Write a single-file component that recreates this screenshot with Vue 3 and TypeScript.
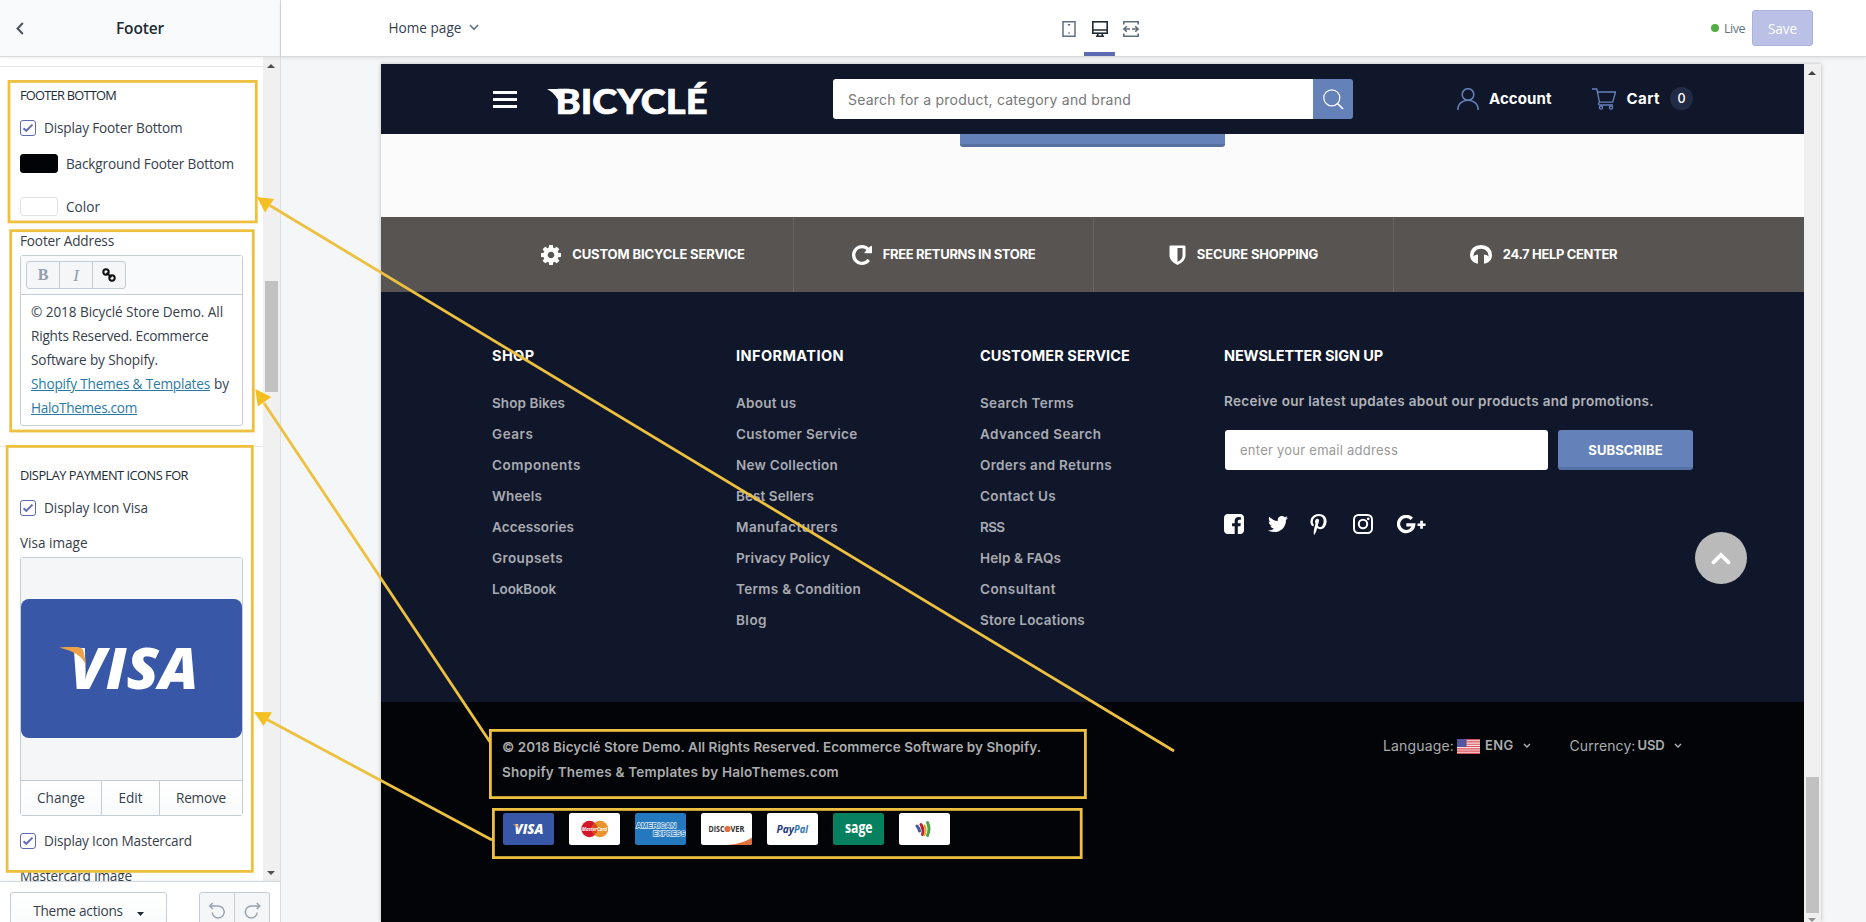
<script setup lang="ts">
import type { Directive } from 'vue'

/* Tracks a label out (or in) until it spans the given width in pixels. */
const vFit: Directive<HTMLElement, number> = {
  mounted(el, { value }) {
    const count = (el.textContent ?? '').trim().length
    const natural = el.getBoundingClientRect().width
    if (count > 1) el.style.letterSpacing = `${((value - natural) / count).toFixed(3)}px`
  },
}

type Label = [text: string, width: number]

const columns: { title: Label; links: Label[] }[] = [
  {
    title: ['SHOP', 42.5],
    links: [['Shop Bikes', 73], ['Gears', 41.5], ['Components', 89], ['Wheels', 50], ['Accessories', 82], ['Groupsets', 71], ['LookBook', 64]],
  },
  {
    title: ['INFORMATION', 108],
    links: [['About us', 60.5], ['Customer Service', 121.5], ['New Collection', 102], ['Best Sellers', 78], ['Manufacturers', 102], ['Privacy Policy', 94], ['Terms & Condition', 125], ['Blog', 31]],
  },
  {
    title: ['CUSTOMER SERVICE', 150],
    links: [['Search Terms', 94], ['Advanced Search', 121.5], ['Orders and Returns', 132], ['Contact Us', 76], ['RSS', 24.5], ['Help & FAQs', 81], ['Consultant', 76], ['Store Locations', 105]],
  },
]

const cogPath = 'M1152 896q0-106-75-181t-181-75-181 75-75 181 75 181 181 75 181-75 75-181zm512-109v222q0 12-8 23t-20 13l-185 28q-19 54-39 91 35 50 107 138 10 12 10 25t-9 23q-27 37-99 108t-94 71q-12 0-26-9l-138-108q-44 23-91 38-16 136-29 186-7 28-36 28h-222q-14 0-24.5-8.5t-11.5-21.5l-28-184q-49-16-90-37l-141 107q-10 9-25 9-14 0-25-11-126-114-165-168-7-10-7-23 0-12 8-23 15-21 51-66.5t54-70.5q-27-50-41-99l-183-27q-13-2-21-12.5t-8-23.5v-222q0-12 8-23t19-13l186-28q14-46 39-92-40-57-107-138-10-12-10-24 0-10 9-23 26-36 98.5-107.5t94.5-71.5q13 0 26 10l138 107q44-23 91-38 16-136 29-186 7-28 36-28h222q14 0 24.5 8.5t11.5 21.5l28 184q49 16 90 37l142-107q9-9 24-9 13 0 25 10 129 119 165 170 7 8 7 22 0 12-8 23-15 21-51 66.5t-54 70.5q26 50 41 98l183 28q13 2 21 12.5t8 23.5z'
const repeatPath = 'M1664 256v448q0 26-19 45t-45 19h-448q-42 0-59-40-17-39 14-69l138-138q-148-137-349-137-104 0-198.5 40.5t-163.5 109.5-109.5 163.5-40.5 198.5 40.5 198.5 109.5 163.5 163.5 109.5 198.5 40.5q119 0 225-52t179-147q7-10 23-12 15 0 25 9l137 138q9 8 9.5 20.5t-7.5 22.5q-109 132-264 204.5t-327 72.5q-156 0-298-61t-245-164-164-245-61-298 61-298 164-245 245-164 298-61q147 0 284.5 55.5t244.5 156.5l130-129q29-31 70-14 39 17 39 59z'
const facebookPath = 'M1376 128q119 0 203.5 84.5t84.5 203.5v960q0 119-84.5 203.5t-203.5 84.5h-188v-595h199l30-232h-229v-148q0-56 23.5-84t91.5-28l122-1v-207q-63-9-178-9-136 0-217.5 80t-81.5 226v171h-200v232h200v595h-532q-119 0-203.5-84.5t-84.5-203.5v-960q0-119 84.5-203.5t203.5-84.5h960z'
const twitterPath = 'M1684 408q-67 98-162 167 1 14 1 42 0 130-38 259.5t-115.5 248.5-184.5 210.5-258 146-323 54.5q-271 0-496-145 35 4 78 4 225 0 401-138-105-2-188-64.5t-114-159.5q33 5 61 5 43 0 85-11-112-23-185.5-111.5t-73.5-205.5v-4q68 38 146 41-66-44-105-115t-39-154q0-88 44-163 121 149 294.5 238.5t371.5 99.5q-8-38-8-74 0-134 94.5-228.5t228.5-94.5q140 0 236 102 109-21 205-78-37 115-142 178 93-10 186-50z'
const pinterestPath = 'M256 597q0-108 37.5-203.5t103.5-166.5 152-123 185-78 202-26q158 0 294 66.5t221 193.5 85 287q0 96-19 188t-60 177-100 149.5-145 103-189 38.5q-68 0-135-32t-96-88q-10 39-28 112.5t-23.5 95-20.5 71-26 71-32 62.5-46 77.5-62 86.5l-14 5-9-10q-15-157-15-188 0-92 21.5-206.5t66.5-287.5 52-203q-32-65-32-169 0-83 52-156t132-73q61 0 95 40.5t34 102.5q0 66-44 191t-44 187q0 63 45 104.5t109 41.5q55 0 102-25t78.5-68 56-95 38-110.5 20-111 6.5-99.5q0-173-109.5-269.5t-285.5-96.5q-200 0-334 129.5t-134 328.5q0 44 12.5 85t27 65 27 45.5 12.5 30.5q0 28-15 73t-37 45q-2 0-17-3-51-15-90.5-56t-61-94.5-32.5-108-11-106.5z'
</script>

<template>
  <div class="editor">
    <aside class="side">
      <header class="side-head">
        <svg class="back" width="8" height="13" viewBox="0 0 8 13"><path d="M6.8 1 1.6 6.5l5.2 5.5" fill="none" stroke="#4a5663" stroke-width="2.1" /></svg>
        <span v-fit="48" class="side-title">Footer</span>
      </header>

      <div class="side-mid">
        <div class="settings">
          <div class="rule first"></div>
          <h3><span v-fit="96">FOOTER BOTTOM</span></h3>
          <label class="check">
            <i class="box"><svg width="12" height="10" viewBox="0 0 12 10"><path d="m1.5 5.2 2.8 2.6L10.5 1.6" /></svg></i>
            <span v-fit="138.5">Display Footer Bottom</span>
          </label>
          <div class="color-row"><i class="swatch black"></i><span v-fit="168">Background Footer Bottom</span></div>
          <div class="color-row second"><i class="swatch"></i><span v-fit="34">Color</span></div>
          <div class="field"><span v-fit="94">Footer Address</span></div>
          <div class="rte">
            <div class="rte-bar">
              <div class="rte-group">
                <b class="bold">B</b><b class="ital">I</b>
                <b><svg width="14" height="14" viewBox="0 0 14 14" fill="none" stroke="#111" stroke-width="2"><circle cx="4" cy="4" r="2.7" /><circle cx="10" cy="10" r="2.7" /><path d="m4.6 4.6 4.8 4.8" /></svg></b>
              </div>
            </div>
            <div class="rte-text">
              <div><span v-fit="192">© 2018 Bicyclé Store Demo. All</span></div>
              <div><span v-fit="177.5">Rights Reserved. Ecommerce</span></div>
              <div><span v-fit="127">Software by Shopify.</span></div>
              <div class="split"><a v-fit="179">Shopify Themes &amp; Templates</a><span v-fit="15">by</span></div>
              <div><a v-fit="106">HaloThemes.com</a></div>
            </div>
          </div>
          <div class="rule"></div>
          <h3><span v-fit="168">DISPLAY PAYMENT ICONS FOR</span></h3>
          <label class="check">
            <i class="box"><svg width="12" height="10" viewBox="0 0 12 10"><path d="m1.5 5.2 2.8 2.6L10.5 1.6" /></svg></i>
            <span v-fit="104">Display Icon Visa</span>
          </label>
          <div class="field image-label"><span v-fit="67.5">Visa image</span></div>
          <div class="image-box">
            <div class="image-view">
              <svg width="221" height="139" viewBox="0 0 221 139">
                <rect width="221" height="139" rx="8" fill="#3857a6" />
                <text x="48.5" y="89.8" textLength="129" lengthAdjust="spacingAndGlyphs" class="visa" font-size="57">VISA</text>
                <path d="M38.5 48.8q3-.8 6-.8h12q5 .4 6 4l2.600 14.500q-5.500-13.500-26.600-17.700z" fill="#eda247" />
              </svg>
            </div>
            <div class="image-actions">
              <span><em v-fit="48">Change</em></span><span><em v-fit="24">Edit</em></span><span><em v-fit="50">Remove</em></span>
            </div>
          </div>
          <label class="check mc">
            <i class="box"><svg width="12" height="10" viewBox="0 0 12 10"><path d="m1.5 5.2 2.800 2.600L10.500 1.600" /></svg></i>
            <span v-fit="148">Display Icon Mastercard</span>
          </label>
          <div class="field image-label"><span v-fit="112">Mastercard image</span></div>
        </div>
        <div class="scroll">
          <svg class="up" width="8" height="4" viewBox="0 0 8 4"><path d="M0 4 4 0l4 4z" fill="#505050" /></svg>
          <i class="thumb"></i>
          <svg class="down" width="8" height="4" viewBox="0 0 8 4"><path d="m0 0 4 4 4-4z" fill="#505050" /></svg>
        </div>
      </div>

      <footer class="side-foot">
        <button class="theme"><span v-fit="89.500">Theme actions</span><svg width="7" height="4" viewBox="0 0 7 4"><path d="M0 0h7L3.500 4z" fill="#212b36" /></svg></button>
        <div class="history">
          <svg width="18" height="18" viewBox="0 0 18 18"><path d="M4.500 1 1.500 4l3 3M1.500 4H10a6 6 0 1 1-6 6.500" /></svg>
          <svg width="18" height="18" viewBox="0 0 18 18"><path d="m13.500 1 3 3-3 3M16.500 4H8a6 6 0 1 0 6 6.500" /></svg>
        </div>
      </footer>
    </aside>

    <section class="main">
      <header class="bar">
        <div class="page-pick">
          <span v-fit="73">Home page</span>
          <svg width="10" height="7" viewBox="0 0 10 7"><path d="m1 1 4 4.300L9 1" fill="none" stroke="#637381" stroke-width="1.600" /></svg>
        </div>
        <nav class="devices">
          <i><svg width="16" height="16" viewBox="0 0 16 16" fill="none" stroke="#5f6f7d" stroke-width="1.500"><rect x="2" y=".75" width="12" height="14.500" /><path d="M6.800 3.800h2.400M7.300 12h1.400" /></svg></i>
          <i class="on"><svg width="16" height="16" viewBox="0 0 16 16" fill="none" stroke="#212b36" stroke-width="1.600"><rect x=".8" y=".8" width="14.400" height="11.400" /><path d="M1 9h14M5.800 12v3M10.200 12v3M4 15.200h8" /></svg></i>
          <i><svg width="16" height="16" viewBox="0 0 16 16" fill="none" stroke="#5f6f7d" stroke-width="1.600"><path d="M.8 3.500V.8h14.400v2.700M.8 12.500v2.700h14.400v-2.700M7 8H1.300M9 8h5.700M3.800 5.200 1 8l2.800 2.800M12.200 5.200 15 8l-2.800 2.800" /></svg></i>
        </nav>
        <div class="status">
          <i class="dot"></i><span v-fit="21" class="live">Live</span>
          <button class="save"><span v-fit="29">Save</span></button>
        </div>
      </header>

      <div class="stage">
        <div class="frame">
          <div class="store">
            <header class="store-head">
              <svg class="menu" width="24" height="17" viewBox="0 0 24 17" fill="#fff"><path d="M0 0h24v3H0zM0 7h24v3H0zM0 14h24v3H0z" /></svg>
              <svg class="logo" width="162" height="44" viewBox="0 0 162 44" fill="#fff">
                <path d="M0 16h16v14l-6-4.500q-3-6-10-9.500z" />
                <text x="8.500" y="41" textLength="152" lengthAdjust="spacingAndGlyphs" class="logo-text">BICYCLÉ</text>
              </svg>
              <div class="search">
                <div class="search-input"><span v-fit="283">Search for a product, category and brand</span></div>
                <div class="search-btn"><svg width="21" height="21" viewBox="0 0 21 21" fill="none" stroke="#fff" stroke-width="1.200"><circle cx="8.800" cy="8.800" r="8" /><path d="m14.500 14.500 5.500 5.500" stroke-width="1.700" /></svg></div>
              </div>
              <div class="account">
                <svg width="22" height="22" viewBox="0 0 22 22" fill="none" stroke="#6482ba" stroke-width="1.500"><circle cx="11" cy="6.500" r="5.800" /><path d="M.8 22C.8 8.900 21.200 8.900 21.200 22" /></svg>
                <span v-fit="62.500">Account</span>
              </div>
              <div class="cart">
                <svg width="24" height="22" viewBox="0 0 24 22" fill="none" stroke="#6482ba" stroke-width="1.300"><path d="M0 1h4.800L7.500 14.200h13.200L23.500 4H5.500M7.500 14.200q-2.200 2.300.5 2.800h13" /><circle cx="9" cy="19.600" r="1.600" /><circle cx="19" cy="19.600" r="1.600" /></svg>
                <span v-fit="33.500">Cart</span><em>0</em>
              </div>
            </header>

            <div class="blank"><i></i></div>

            <div class="services">
              <div class="service"><svg width="20" height="20" viewBox="128 128 1536 1536" fill="#fff"><path :d="cogPath" /></svg><span v-fit="172.500">CUSTOM BICYCLE SERVICE</span></div>
              <div class="service"><svg width="20" height="20" viewBox="128 128 1536 1536" fill="#fff"><path :d="repeatPath" /></svg><span v-fit="152.500">FREE RETURNS IN STORE</span></div>
              <div class="service"><svg width="17" height="20" viewBox="0 0 17 20"><path d="M1.500.5h14q1 0 1 1V11q0 5-8 9-8-4-8-9V1.500q0-1 1-1z" fill="#fff" /><path d="M8.500 3h5v8q0 3-5 6z" fill="#575452" /></svg><span v-fit="121.500">SECURE SHOPPING</span></div>
              <div class="service"><svg width="22" height="19" viewBox="0 0 22 19" fill="#fff"><path d="M8 9.500V18.500H6.500Q0 16.500 0 10 .5.300 11 0q10.500.3 11 10 0 6.500-6.500 8.500H14V9.500q3 .2 4.600 2Q18.200 4 11 3.800 3.800 4 3.400 11.500 5 9.700 8 9.500z" /></svg><span v-fit="114.500">24.7 HELP CENTER</span></div>
            </div>

            <div class="links">
              <div v-for="col in columns" :key="col.title[0]" class="col">
                <h4><span v-fit="col.title[1]">{{ col.title[0] }}</span></h4>
                <ul><li v-for="link in col.links" :key="link[0]"><span v-fit="link[1]">{{ link[0] }}</span></li></ul>
              </div>
              <div class="news">
                <h4><span v-fit="159">NEWSLETTER SIGN UP</span></h4>
                <p><span v-fit="430">Receive our latest updates about our products and promotions.</span></p>
                <div class="form">
                  <div class="email"><span v-fit="158">enter your email address</span></div>
                  <div class="sub"><span v-fit="74.500">SUBSCRIBE</span></div>
                </div>
                <div class="social">
                  <svg width="20" height="20" viewBox="128 128 1536 1536"><path :d="facebookPath" /></svg>
                  <svg width="20" height="18" viewBox="108 256 1576 1280"><path :d="twitterPath" /></svg>
                  <svg width="17" height="21" viewBox="256 0 1280 1664"><path :d="pinterestPath" /></svg>
                  <svg width="20" height="20" viewBox="0 0 20 20"><g fill="none" stroke="#fff" stroke-width="2"><rect x="1" y="1" width="18" height="18" rx="4.500" /><circle cx="10" cy="10" r="4.200" /></g><circle cx="15.200" cy="4.800" r="1.400" /></svg>
                  <svg width="29" height="19" viewBox="0 0 29 19"><path d="M14.800 3.900A7.600 7.600 0 1 0 16.700 9.800H9.300" fill="none" stroke="#fff" stroke-width="3.300" /><path d="M23.200 5.700h2.700v2.700h2.700v2.700h-2.700v2.700h-2.700v-2.700h-2.700V8.400h2.700z" /></svg>
                </div>
              </div>
              <div class="totop"><svg width="20" height="13" viewBox="0 0 20 13"><path d="M2.500 10.300 10 3l7.500 7.300" fill="none" stroke="#fff" stroke-width="3.800" stroke-linecap="round" /></svg></div>
            </div>

            <div class="legal">
              <div class="legal-left">
                <p><span v-fit="539">© 2018 Bicyclé Store Demo. All Rights Reserved. Ecommerce Software by Shopify.</span></p>
                <p><span v-fit="337">Shopify Themes &amp; Templates by HaloThemes.com</span></p>
                <div class="cards">
                  <svg viewBox="0 0 51 32"><rect width="51" height="32" rx="2.500" fill="#3857a6" /><text x="11.500" y="21" textLength="29" lengthAdjust="spacingAndGlyphs" class="visa" font-size="13.500">VISA</text><path d="M9.500 11.500h5l1 4q-2-3-6-4z" fill="#eda247" /></svg>
                  <svg viewBox="0 0 51 32"><rect width="51" height="32" rx="2.500" fill="#fff" /><circle cx="20.500" cy="16" r="8.200" fill="#d3172b" /><circle cx="31" cy="16" r="8.200" fill="#e8932c" /><path d="M25.750 9.700a8.200 8.200 0 0 1 0 12.600 8.200 8.200 0 0 1 0-12.600z" fill="#d9471d" /><text x="13" y="18" textLength="25" lengthAdjust="spacingAndGlyphs" class="mark ital" font-size="6" fill="#fff">MasterCard</text></svg>
                  <svg viewBox="0 0 51 32"><rect width="51" height="32" rx="2.500" fill="#2478bd" /><g class="amex" font-size="8"><text x="1" y="14.800" textLength="40" lengthAdjust="spacingAndGlyphs">AMERICAN</text><text x="18" y="22.900" textLength="32.500" lengthAdjust="spacingAndGlyphs">EXPRESS</text></g></svg>
                  <svg viewBox="0 0 51 32"><rect width="51" height="32" rx="2.500" fill="#fff" /><path d="M27 32q16-1.500 24-7.500v5q0 2.500-2.500 2.500z" fill="#e0703a" /><text x="7.500" y="19.200" textLength="16" lengthAdjust="spacingAndGlyphs" class="mark" font-size="8.500" fill="#333">DISC</text><circle cx="26.500" cy="16" r="3.100" fill="#e0703a" /><text x="29.500" y="19.200" textLength="14" lengthAdjust="spacingAndGlyphs" class="mark" font-size="8.500" fill="#333">VER</text></svg>
                  <svg viewBox="0 0 51 32"><rect width="51" height="32" rx="2.500" fill="#fff" /><text x="9.500" y="19.800" textLength="17.500" lengthAdjust="spacingAndGlyphs" class="mark ital" font-size="10.500" fill="#253b80">Pay</text><text x="27" y="19.800" textLength="14" lengthAdjust="spacingAndGlyphs" class="mark ital" font-size="10.500" fill="#2e78b5">Pal</text></svg>
                  <svg viewBox="0 0 51 32"><rect width="51" height="32" rx="2.500" fill="#078060" /><text x="12" y="20.200" textLength="27.500" lengthAdjust="spacingAndGlyphs" class="mark" font-size="15.500" fill="#fff">sage</text></svg>
                  <svg viewBox="0 0 51 32"><rect width="51" height="32" rx="2.500" fill="#fff" /><g fill="none" stroke-width="3" stroke-linecap="round"><path d="M18 13q2 2 2.500 5" stroke="#3e5ba8" /><path d="M22 11.500q3 5 1.500 10" stroke="#b52a2e" /><path d="M25.500 12.500q2 4 0 9.500" stroke="#e8a12d" stroke-width="2" /><path d="M28.500 9.500q3 6.500 0 13" stroke="#4ca648" /></g></svg>
                </div>
              </div>
              <div class="locale">
                <span v-fit="71">Language:</span>
                <svg class="flag" width="23" height="15" viewBox="0 0 23 15"><rect width="23" height="15" fill="#f6dede" /><path d="M0 .6h23M0 2.900h23M0 5.200h23M0 7.500h23M0 9.800h23M0 12.100h23M0 14.400h23" stroke="#d9535c" stroke-width="1.150" /><rect width="9.500" height="8" fill="#54559c" /></svg>
                <b v-fit="28.500">ENG</b><svg class="chev" width="8" height="6" viewBox="0 0 8 6"><path d="m1 1 3 3 3-3" /></svg>
                <span v-fit="66" class="cur">Currency:</span><b v-fit="27">USD</b><svg class="chev" width="8" height="6" viewBox="0 0 8 6"><path d="m1 1 3 3 3-3" /></svg>
              </div>
            </div>
          </div>
          <div class="store-scroll">
            <svg class="up" width="8" height="4" viewBox="0 0 8 4"><path d="M0 4 4 0l4 4z" fill="#404040" /></svg>
            <i class="thumb"></i>
            <svg class="down" width="8" height="4" viewBox="0 0 8 4"><path d="m0 0 4 4 4-4z" fill="#909090" /></svg>
          </div>
        </div>
      </div>
    </section>

    <svg class="notes" width="1866" height="922" viewBox="0 0 1866 922">
      <g fill="none" stroke="#edc03f" stroke-width="2.800">
        <rect x="9" y="81.400" width="247.300" height="140.500" />
        <rect x="10.700" y="230.700" width="242.600" height="200.300" />
        <rect x="7.100" y="446.400" width="245.200" height="425" />
        <rect x="490.400" y="730.400" width="595" height="67.200" />
        <rect x="493.400" y="809.400" width="587.800" height="48.200" />
        <path d="M1174 751 270 205.500M490 742 264 403M492 840 267 719.500" />
      </g>
      <path d="m257 197 17 2-9 13.500zM255.300 389l16 8-13.500 9.500zM254 712l18 .3-8.500 13.800z" fill="#f4bf20" />
    </svg>
  </div>
</template>

<style>
html, body { margin: 0; overflow: hidden; }
</style>

<style scoped>
* { box-sizing: border-box; }
.editor { position: relative; display: flex; width: 1866px; height: 922px; overflow: hidden; background: #f4f6f8; font-family: "Open Sans", "Noto Sans", sans-serif; font-size: 13.600px; color: #36404c; }
.editor svg { display: block; flex: none; }
.editor span, .editor em, .editor a, .editor b { white-space: nowrap; display: inline-block; flex: none; font-style: normal; }
h3, h4, p, ul { margin: 0; padding: 0; list-style: none; }
button { font: inherit; color: inherit; padding: 0; }

.side { width: 281px; display: flex; flex-direction: column; border-right: 1px solid #dde1e5; background: #fff; }
.side-head { position: relative; z-index: 1; flex: none; height: 57px; background: #f9fafb; border-bottom: 1px solid #d8dbde; box-shadow: 0 1px 3px rgba(0,0,0,.07); display: flex; align-items: center; justify-content: center; }
.back { position: absolute; left: 15.500px; top: 22px; }
.side-title { font-size: 15.500px; font-weight: 600; color: #212b36; line-height: 22px; }
.side-mid { flex: none; height: 824px; display: flex; overflow: hidden; }
.settings { width: 263px; padding: 0 20px; }
.rule { height: 21px; margin: 0 -20px; border-bottom: 1px solid #e6e8ea; }
.rule.first { height: 10px; }
h3 { margin-top: 18px; height: 20px; line-height: 20px; font-size: 12.800px; font-weight: 400; color: #212b36; }
.check { margin-top: 13px; height: 20px; line-height: 20px; display: flex; align-items: center; gap: 8px; }
.check.mc { margin-top: 15px; }
.box { width: 16px; height: 16px; border: 1px solid #5f6bb0; border-radius: 3px; display: flex; align-items: center; justify-content: center; }
.box path { fill: none; stroke: #6670b5; stroke-width: 2; }
.color-row { margin-top: 15px; height: 21px; line-height: 19px; display: flex; align-items: center; gap: 8px; }
.color-row.second { margin-top: 22px; padding-bottom: 1px; }
.swatch { width: 38px; height: 19px; border: 1px solid #dfe3e8; border-radius: 3px; }
.swatch.black { background: #020307; border-color: #020307; }
.field { margin-top: 14px; height: 20px; line-height: 20px; }
.field.image-label { margin-top: 15px; }
.rte { margin-top: 4px; height: 171px; border: 1px solid #c4cdd5; border-radius: 3px; }
.rte-bar { height: 39px; border-bottom: 1px solid #c4cdd5; background: #f9fafb; padding: 5px; }
.rte-group { display: flex; width: 100px; height: 28px; border: 1px solid #c4cdd5; border-radius: 3px; background: #f4f6f8; }
.rte-group b { flex: 1; display: flex; align-items: center; justify-content: center; font: 700 16px/1 "Liberation Serif", serif; color: #919eab; }
.rte-group b + b { border-left: 1px solid #c4cdd5; }
.rte-group .ital { font-style: italic; font-weight: 400; font-size: 17px; }
.rte-text { padding: 5px 10px; line-height: 24px; }
.rte-text > div { height: 24px; }
.split { display: flex; gap: 4px; }
.rte-text a { color: #2a7ba4; text-decoration: underline; }
.image-box { margin-top: 4px; border: 1px solid #c4cdd5; border-radius: 3px; height: 259px; }
.image-view { height: 222px; background: #f4f6f8; display: flex; align-items: center; padding-bottom: 1px; }
.image-actions { display: flex; height: 35px; border-top: 1px solid #c4cdd5; line-height: 34px; background: linear-gradient(#fff, #f9fafb); text-align: center; }
.image-actions > span { width: 80px; }
.image-actions > span:nth-child(2) { width: 59px; border: solid #c4cdd5; border-width: 0 1px; }
.image-actions > span:nth-child(3) { flex: 1; }
.scroll, .store-scroll { position: relative; width: 17px; background: #f0f0f0; flex: none; }
.up, .down, .thumb { position: absolute; left: 4px; }
.scroll .up { top: 7px; }
.scroll .down { bottom: 6px; }
.scroll .thumb { left: 2px; top: 224px; width: 13px; height: 111px; background: #c1c1c1; }
.side-foot { position: relative; flex: 1; border-top: 1px solid #d3d8dc; box-shadow: 0 -1px 2px rgba(0,0,0,.05); padding: 10px; display: flex; justify-content: space-between; align-items: flex-start; background: #fff; }
.theme { flex: none; width: 157px; height: 38px; border: 1px solid #c4cdd5; border-radius: 3px; background: linear-gradient(#fff, #f9fafb); display: flex; align-items: center; justify-content: center; gap: 14px; line-height: 20px; }
.theme svg { margin-top: 6px; }
.history { flex: none; width: 71px; height: 38px; border: 1px solid #c4cdd5; border-radius: 3px; display: flex; background: #f4f6f8 linear-gradient(#c4cdd5, #c4cdd5) 50% 0 / 1px 100% no-repeat; }
.history svg { flex: 1; width: 50%; height: 18px; margin-top: 9px; fill: none; stroke: #98a4b0; stroke-width: 1.500; }

.main { flex: 1; display: flex; flex-direction: column; }
.bar { position: relative; z-index: 1; flex: none; height: 57px; background: #fff; border-bottom: 1px solid #d8dbde; box-shadow: 0 1px 4px rgba(0,0,0,.1); display: grid; grid-template-columns: 772px 94px 1fr; }
.page-pick { display: flex; align-items: center; gap: 7px; padding: 0 0 2px 107.500px; }
.devices { display: flex; }
.devices i { width: 31px; display: flex; justify-content: center; padding-top: 21px; }
.devices .on { border-bottom: 4px solid #5c6ab4; }
.status { display: flex; justify-content: flex-end; align-items: center; padding-right: 53px; }
.dot { width: 8px; height: 8px; border-radius: 50%; background: #52ad45; margin-right: 5px; }
.live { font-size: 12.500px; color: #637381; margin-right: 7px; padding-top: 1px; }
.save { width: 61px; height: 36px; border: 1px solid #a9b1dc; border-radius: 3px; background: #bac0e6; color: #fff; }
.stage { flex: 1; padding: 7px 0 0 100px; }
.frame { display: flex; width: 1440px; height: 858px; box-shadow: 0 0 4px rgba(0,0,0,.25); }

.store { width: 1423px; background: #020408; font-family: Inter, "Open Sans", sans-serif; font-size: 13.500px; }
.store-head { height: 70px; background: #10172a; display: flex; align-items: center; padding-left: 112px; color: #fff; }
.logo { margin: -9px 0 0 30px; overflow: visible; }
.logo-text { font: 900 34.500px Lato, Inter, sans-serif; stroke: #fff; stroke-width: .7; }
.search { display: flex; width: 520px; height: 40px; margin-left: 124px; border-radius: 3px; overflow: hidden; }
.search-input { flex: 1; background: #fff; padding-left: 15px; color: #777; font-size: 14px; line-height: 42px; }
.search-btn { width: 40px; background: #6482b9; display: flex; align-items: center; justify-content: center; }
.account { display: flex; align-items: center; gap: 10px; margin-left: 104px; font-size: 15px; font-weight: 700; line-height: 18px; padding-bottom: 1px; }
.cart { display: flex; align-items: center; margin-left: 40px; font-size: 15px; font-weight: 700; line-height: 18px; padding-bottom: 1px; }
.cart span { margin: 0 10px 0 11px; }
.cart em { width: 23px; height: 23px; border-radius: 50%; background: #212b46; text-align: center; font-size: 12.500px; font-weight: 500; line-height: 23px; }
.blank { height: 83px; background: #fbfbfb; padding-left: 579px; }
.blank i { display: block; width: 265px; height: 13px; background: #6482b9; border-bottom: 3px solid #58709f; border-radius: 0 0 3px 3px; }
.services { height: 75px; background: #575452; padding-left: 112px; display: grid; grid-template-columns: repeat(4, 300px); }
.service { display: flex; align-items: center; justify-content: center; gap: 11px; color: #fff; font-weight: 700; font-size: 13px; }
.service span { padding-bottom: 1px; }
.service + .service { border-left: 1px solid #686563; }
.links { position: relative; height: 410px; background: #10172a; padding: 54px 0 0 112px; display: grid; grid-template-columns: 244px 244px 244px 468px; color: #a9abb3; font-weight: 600; align-items: start; }
.links h4 { margin-left: -1px; font-size: 14.500px; font-weight: 700; color: #fff; line-height: 20px; height: 20px; }
.col ul { margin: 22px 0 0 -1px; }
.col li { height: 31px; line-height: 31px; }
.news p { margin: 25px 0 0 -1px; line-height: 20px; height: 20px; color: #b0b3b9; }
.form { margin-top: 19px; display: flex; gap: 10px; }
.email { width: 323px; height: 40px; border-radius: 3px; background: #fff; color: #999; font-size: 13px; font-weight: 400; line-height: 40px; padding-left: 15px; }
.sub { width: 135px; height: 40px; border-radius: 3px; background: #6482b9; border-bottom: 3px solid #5670a8; color: #fff; text-align: center; font-size: 13px; font-weight: 700; line-height: 40px; }
.social { margin: 43px 0 0 -1px; height: 22px; display: flex; align-items: center; fill: #fff; }
.social svg + svg { margin-left: 24px; }
.social svg:nth-child(3) { margin-left: 22px; }
.social svg:nth-child(4) { margin-left: 26px; }
.totop { position: absolute; left: 1314px; top: 240px; width: 52px; height: 52px; border-radius: 50%; background: #bababa; display: flex; align-items: center; justify-content: center; }
.legal { display: flex; height: 220px; padding-left: 121px; color: #abacae; }
.legal-left { padding-top: 33px; width: 881px; font-weight: 600; }
.legal-left p { height: 25px; line-height: 25px; }
.cards { margin: 28px 0 0 1px; display: flex; gap: 15px; }
.cards svg { width: 51px; height: 32px; }
.locale { display: flex; align-items: center; height: 20px; margin-top: 33px; font-weight: 400; font-size: 14px; }
.locale b { font-weight: 600; font-size: 13px; }
.flag { margin: 3px 5px 0 3px; }
.chev { margin: 2px 0 0 9px; fill: none; stroke: #abacae; stroke-width: 1.500; }
.cur { margin: 0 2px 0 39px; }
.visa { font-family: "Open Sans", sans-serif; font-weight: 800; font-style: italic; fill: #fff; }
.mark { font-family: "Open Sans", sans-serif; font-weight: 700; }
.mark.ital { font-style: italic; }
.amex { font-family: "Liberation Sans", sans-serif; font-weight: 700; fill: #2478bd; stroke: #d5e7f5; stroke-width: 1.500; paint-order: stroke; }
.store-scroll .up { top: 7px; }
.store-scroll .thumb { left: 2px; top: 713px; width: 13px; height: 136px; background: #c1c1c1; }
.store-scroll .down { bottom: 0; }
.notes { position: absolute; left: 0; top: 0; z-index: 5; pointer-events: none; }
</style>
